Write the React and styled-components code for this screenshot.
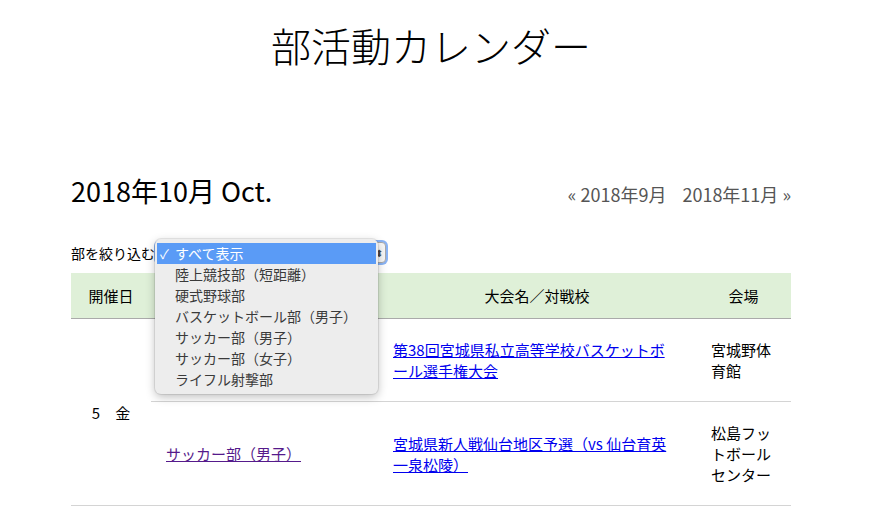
import React from 'react';
import styled, { createGlobalStyle } from 'styled-components';

const GlobalStyle = createGlobalStyle`
  html, body {
    margin: 0;
    padding: 0;
    background: #fff;
  }
  body {
    font-family: "Noto Sans CJK JP", "Noto Sans", sans-serif;
    color: #000;
  }
`;

const Page = styled.div`
  width: 720px;
  margin-left: 71px;
  padding-top: 21px;
  padding-bottom: 10px;
`;

const Title = styled.h1`
  margin: 0;
  font-size: 40px;
  line-height: 48px;
  font-weight: 300;
  text-align: center;
`;

const MonthRow = styled.div`
  display: flex;
  justify-content: space-between;
  align-items: baseline;
  margin-top: 106px;
`;

const MonthTitle = styled.h2`
  margin: 0;
  font-size: 27px;
  line-height: 32px;
  font-weight: 400;
`;

const MonthNav = styled.div`
  display: flex;
  gap: 16px;
  font-size: 18px;
`;

const NavLink = styled.a`
  color: #555;
  text-decoration: none;
`;

const FilterRow = styled.div`
  display: flex;
  align-items: center;
  margin-top: 35px;
  height: 21px;
  font-size: 14px;
`;

const FilterLabel = styled.span`
  width: 84px;
  white-space: nowrap;
  overflow: visible;
`;

const SelectBox = styled.div`
  position: relative;
  width: 228px;
  height: 19px;
  border: 1px solid #aaa;
  border-radius: 4px;
  box-shadow: 0 0 0 2px #8ab4f5;
  background: #f7f7f7;
  margin-left: 1px;
`;

const SelectArrows = styled.span`
  position: absolute;
  right: 2px;
  top: 2px;
  font-size: 10px;
  line-height: 15px;
  color: #444;
`;

const Popup = styled.ul`
  position: absolute;
  left: -2px;
  top: -4px;
  width: 223px;
  margin: 0;
  padding: 4px 0;
  list-style: none;
  background: #ededed;
  border-radius: 6px;
  box-shadow: 0 3px 10px rgba(0, 0, 0, 0.25), 0 0 0 1px rgba(0, 0, 0, 0.08);
  z-index: 10;
`;

const PopupItem = styled.li`
  position: relative;
  height: 21px;
  line-height: 21px;
  margin: 0 2px;
  padding-left: 18px;
  font-size: 14px;
  color: ${p => (p.$active ? '#fff' : '#3a3a3a')};
  background: ${p => (p.$active ? '#5a9bf6' : 'transparent')};
  white-space: nowrap;
`;

const Check = styled.span`
  position: absolute;
  left: 3px;
  top: 0;
  font-size: 13px;
`;

const Table = styled.table`
  width: 720px;
  margin-top: 10px;
  border-collapse: collapse;
  table-layout: fixed;
  font-size: 15px;
`;

const HeadCell = styled.th`
  height: 45px;
  padding: 0;
  background: #dff0d8;
  border-bottom: 1px solid #aaa;
  font-weight: 400;
  text-align: center;
`;

const Cell = styled.td`
  padding: 20px ${p => p.$padRight || 15}px 20px 15px;
  line-height: 21px;
  vertical-align: middle;
  text-align: ${p => p.$align || 'left'};
  border-bottom: 1px solid #d4d4d4;
`;

const EventLink = styled.a`
  color: ${p => (p.$visited ? '#551a8b' : '#0000ee')};
  text-decoration: underline;
`;

const clubs = [
  'すべて表示',
  '陸上競技部（短距離）',
  '硬式野球部',
  'バスケットボール部（男子）',
  'サッカー部（男子）',
  'サッカー部（女子）',
  'ライフル射撃部',
];

const events = [
  {
    club: 'バスケットボール部（男子）',
    name: '第38回宮城県私立高等学校バスケットボール選手権大会',
    place: '宮城野体育館',
  },
  {
    club: 'サッカー部（男子）',
    name: '宮城県新人戦仙台地区予選（vs 仙台育英一泉松陵）',
    place: '松島フットボールセンター',
  },
];

export default function App() {
  return (
    <>
      <GlobalStyle />
      <Page>
        <Title>部活動カレンダー</Title>

        <MonthRow>
          <MonthTitle>2018年10月 Oct.</MonthTitle>
          <MonthNav>
            <NavLink href="#">« 2018年9月</NavLink>
            <NavLink href="#">2018年11月 »</NavLink>
          </MonthNav>
        </MonthRow>

        <FilterRow>
          <FilterLabel>部を絞り込む</FilterLabel>
          <SelectBox>
            <SelectArrows>⬍</SelectArrows>
            <Popup>
              {clubs.map((c, i) => (
                <PopupItem key={c} $active={i === 0}>
                  {i === 0 && <Check>✓</Check>}
                  {c}
                </PopupItem>
              ))}
            </Popup>
          </SelectBox>
        </FilterRow>

        <Table>
          <colgroup>
            <col style={{ width: 80 }} />
            <col style={{ width: 227 }} />
            <col style={{ width: 318 }} />
            <col style={{ width: 95 }} />
          </colgroup>
          <thead>
            <tr>
              <HeadCell>開催日</HeadCell>
              <HeadCell>部</HeadCell>
              <HeadCell>大会名／対戦校</HeadCell>
              <HeadCell>会場</HeadCell>
            </tr>
          </thead>
          <tbody>
            {events.map((e, i) => (
              <tr key={e.name}>
                {i === 0 && (
                  <Cell rowSpan={events.length} $align="center">
                    5　金
                  </Cell>
                )}
                <Cell>
                  <EventLink href="#" $visited>{e.club}</EventLink>
                </Cell>
                <Cell $padRight={21}>
                  <EventLink href="#">{e.name}</EventLink>
                </Cell>
                <Cell>{e.place}</Cell>
              </tr>
            ))}
          </tbody>
        </Table>
      </Page>
    </>
  );
}
